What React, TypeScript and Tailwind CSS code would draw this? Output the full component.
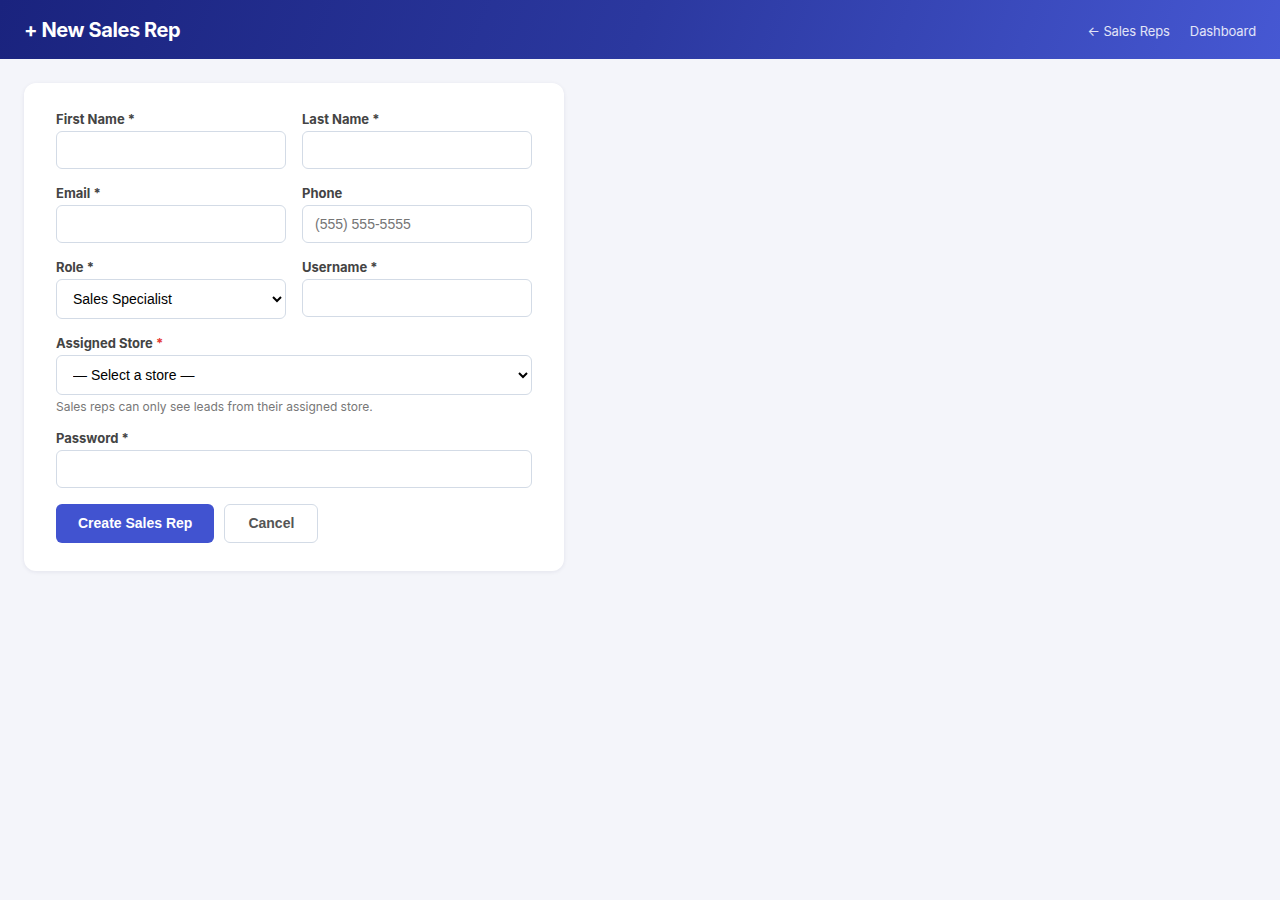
export default function App() {
  const label = "block text-[13px] font-bold text-[#444] mb-1 leading-4 font-['Inter',sans-serif]"
  const input =
    "block w-full h-[38px] px-3 rounded-md border border-[#d3dbe6] bg-white text-[14px] text-[#222] placeholder:text-[#757575] font-['Liberation_Sans',Arial,sans-serif] outline-none"
  const select =
    "block w-full h-10 px-3 rounded-md border border-[#d3dbe6] bg-white text-[14px] text-black font-['Liberation_Sans',Arial,sans-serif] outline-none"

  return (
    <div className="min-h-[900px] bg-[#f4f5fa] font-['Inter',sans-serif]">
      <header className="h-[59px] flex items-center justify-between px-6 bg-[linear-gradient(110deg,#1a237e_0%,#2b389f_50%,#4658d3_100%)]">
        <h1 className="text-white text-[20px] font-bold tracking-[-0.4px] pt-px">+ New Sales Rep</h1>
        <nav className="flex items-center gap-5 text-[13px] text-white/85 pt-1 tracking-[-0.1px]">
          <a href="#">← Sales Reps</a>
          <a href="#">Dashboard</a>
        </nav>
      </header>

      <main className="p-6">
        <div className="w-[540px] bg-white rounded-xl shadow-[0_1px_4px_rgba(20,30,80,0.08)] px-8 pt-7 pb-7">
          <form className="flex flex-col gap-4">
            <div className="grid grid-cols-2 gap-4">
              <div>
                <label className={label}>First Name *</label>
                <input className={input} />
              </div>
              <div>
                <label className={label}>Last Name *</label>
                <input className={input} />
              </div>
            </div>
            <div className="grid grid-cols-2 gap-4">
              <div>
                <label className={label}>Email *</label>
                <input className={input} />
              </div>
              <div>
                <label className={label}>Phone</label>
                <input className={input} placeholder="(555) 555-5555" />
              </div>
            </div>
            <div className="grid grid-cols-2 gap-4 items-start">
              <div>
                <label className={label}>Role *</label>
                <select className={select} defaultValue="specialist">
                  <option value="specialist">Sales Specialist</option>
                  <option value="manager">Sales Manager</option>
                </select>
              </div>
              <div>
                <label className={label}>Username *</label>
                <input className={input} />
              </div>
            </div>
            <div>
              <label className={label}>
                Assigned Store <span className="text-[#e53935]">*</span>
              </label>
              <select className={select} defaultValue="">
                <option value="">— Select a store —</option>
              </select>
              <p className="mt-1 text-[12px] leading-[15px] text-[#777]">
                Sales reps can only see leads from their assigned store.
              </p>
            </div>
            <div>
              <label className={label}>Password *</label>
              <input type="password" className={input} />
            </div>
            <div className="flex gap-2.5">
              <button
                type="button"
                className="h-[39px] px-[22px] rounded-md bg-[#4153d0] text-white text-[14px] font-bold font-['Liberation_Sans',Arial,sans-serif]"
              >
                Create Sales Rep
              </button>
              <button
                type="button"
                className="h-[39px] px-[23px] rounded-md border border-[#d3dbe6] bg-white text-[#555] text-[14px] font-bold font-['Liberation_Sans',Arial,sans-serif]"
              >
                Cancel
              </button>
            </div>
          </form>
        </div>
      </main>
    </div>
  )
}
